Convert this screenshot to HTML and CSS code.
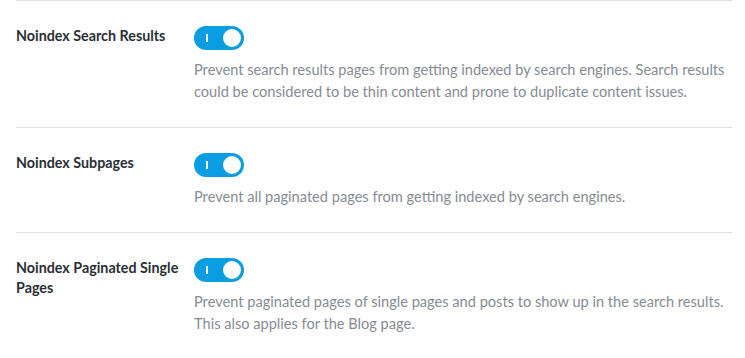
FILE: index.html
```
<!DOCTYPE html>
<html lang="en">
<head>
    <meta charset="UTF-8">
    <title>Indexing settings</title>
    <link rel="stylesheet" href="styles.css">
</head>
<body>

<div class="settings">
    <div class="row">
        <div class="label">Noindex Search Results</div>
        <div class="field">
            <div class="toggle"><span class="bar"></span><span class="knob"></span></div>
            <p class="desc">Prevent search results pages from getting indexed by search engines. Search results could be considered to be thin content and prone to duplicate content issues.</p>
        </div>
    </div>
    <div class="row">
        <div class="label">Noindex Subpages</div>
        <div class="field">
            <div class="toggle"><span class="bar"></span><span class="knob"></span></div>
            <p class="desc">Prevent all paginated pages from getting indexed by search engines.</p>
        </div>
    </div>
    <div class="row">
        <div class="label">Noindex Paginated Single Pages</div>
        <div class="field">
            <div class="toggle"><span class="bar"></span><span class="knob"></span></div>
            <p class="desc">Prevent paginated pages of single pages and posts to show up in the search results. This also applies for the Blog page.</p>
        </div>
    </div>
</div>

</body>
</html>
```

FILE: styles.css
```
body {
    margin: 0;
    background: #fff;
    font-family: Lato, "Liberation Sans", sans-serif;
}
.settings {
    margin: 0 13px 0 16px;
}
.row {
    display: flex;
    border-top: 1px solid #dcdfe3;
    padding: 25px 0 24px;
}
.label {
    width: 168px;
    padding-right: 10px;
    font-size: 14.3px;
    line-height: 20px;
    font-weight: 700;
    color: #2a2f34;
}
.field {
    flex: 1;
}
.toggle {
    width: 50px;
    height: 24px;
    border-radius: 12px;
    background: #0b9de2;
    display: flex;
    align-items: center;
    justify-content: space-between;
    padding: 0 3px 0 12px;
    box-sizing: border-box;
}
.bar {
    width: 2px;
    height: 8px;
    background: #fff;
}
.knob {
    width: 18px;
    height: 18px;
    border-radius: 50%;
    background: #fff;
}
.desc {
    margin: 9px 0 0;
    font-size: 14.6px;
    line-height: 22px;
    color: #858c94;
}
```
